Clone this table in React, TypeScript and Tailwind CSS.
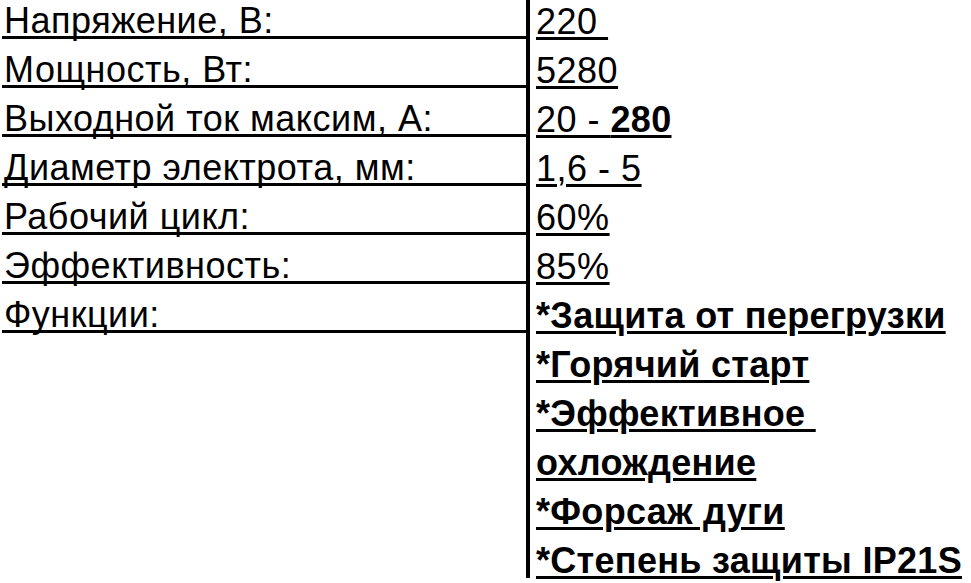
import React from "react";

const rows: { label: string; value: React.ReactNode; bold?: boolean }[] = [
  { label: "Напряжение, В:", value: "220\u00a0" },
  { label: "Мощность, Вт:", value: "5280" },
  { label: "Выходной ток максим, А:", value: (<>20 - <b className="font-bold tracking-[0.3px]">280</b></>) },
  { label: "Диаметр электрота, мм:", value: "1,6 - 5" },
  { label: "Рабочий цикл:", value: "60%" },
  { label: "Эффективность:", value: "85%" },
  { label: "Функции:", value: "*Защита от перегрузки", bold: true },
  { label: "", value: "*Горячий старт", bold: true },
  { label: "", value: "*Эффективное\u00a0", bold: true },
  { label: "", value: "охлождение", bold: true },
  { label: "", value: "*Форсаж дуги", bold: true },
  { label: "", value: "*Степень защиты IP21S", bold: true },
];

export default function App() {
  return (
    <div className="w-[971px] h-[583px] overflow-hidden bg-white text-black" style={{ fontFamily: '"Liberation Sans", Arial, sans-serif' }}>
      <div className="-mt-[10px] grid grid-cols-[526px_1fr]">
        {rows.map((r, i) => (
          <React.Fragment key={i}>
            <div className={`h-[49px] ml-[2px] flex items-end pl-[2px] ${r.label ? "border-b-[3px] border-black" : ""}`}>
              <span className="text-[36px] tracking-[0.5px] leading-none whitespace-nowrap translate-y-[2.5px]">{r.label}</span>
            </div>
            <div className="h-[49px] border-l-[4px] border-black flex items-end pl-[6px]">
              <span className={`text-[36px] leading-none whitespace-nowrap underline decoration-[3px] underline-offset-[3px] translate-y-[1px] ${r.bold ? "font-bold tracking-[0.3px]" : "tracking-[0.5px]"}`}>{r.value}</span>
            </div>
          </React.Fragment>
        ))}
      </div>
    </div>
  );
}
